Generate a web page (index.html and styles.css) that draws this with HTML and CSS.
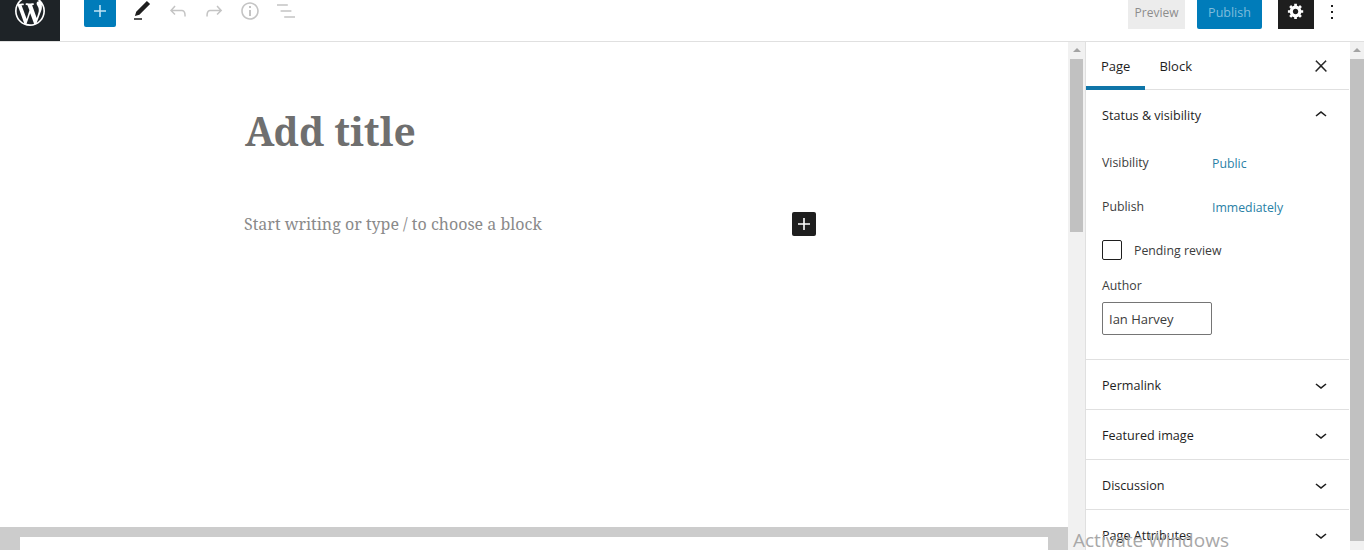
FILE: index.html
```html
<!DOCTYPE html>
<html lang="en">
<head>
    <meta charset="UTF-8">
    <meta name="viewport" content="width=device-width, initial-scale=1.0">
    <title>Add New Page</title>
    <link rel="stylesheet" href="styles.css">
</head>
<body>
    <header class="topbar">
        <a class="wp-logo" href="#">
            <svg viewBox="0 0 20 20" width="30" height="30"><path fill="#fff" d="M20 10c0-5.51-4.49-10-10-10C4.48 0 0 4.49 0 10c0 5.52 4.48 10 10 10 5.51 0 10-4.48 10-10zM7.78 15.37L4.37 6.22c.55-.02 1.17-.08 1.17-.08.5-.06.44-1.13-.06-1.11 0 0-1.45.11-2.37.11-.18 0-.37 0-.58-.01C4.12 2.69 6.87 1.11 10 1.11c2.33 0 4.45.87 6.05 2.34-.68-.11-1.65.39-1.65 1.58 0 .74.45 1.36.9 2.1.35.61.55 1.36.55 2.46 0 1.49-1.4 5-1.4 5l-3.03-8.37c.54-.02.82-.17.82-.17.5-.05.44-1.25-.06-1.22 0 0-1.44.12-2.38.12-.87 0-2.33-.12-2.33-.12-.5-.03-.56 1.2-.06 1.22l.92.08 1.26 3.41zM17.41 10c.24-.64.74-1.87.43-4.25.7 1.29 1.05 2.71 1.05 4.25 0 3.29-1.73 6.24-4.4 7.78.97-2.59 1.94-5.2 2.92-7.78zM6.1 18.09C3.12 16.65 1.11 13.53 1.11 10c0-1.3.23-2.48.72-3.59C3.25 10.3 4.67 14.2 6.1 18.09zm4.03-6.63l2.58 6.98c-.86.29-1.76.45-2.71.45-.79 0-1.57-.11-2.29-.33.81-2.38 1.62-4.74 2.42-7.1z"/></svg>
        </a>
        <div class="tools">
            <button class="tool-add"><svg viewBox="0 0 24 24" width="24" height="24"><path fill="#bfe3f5" d="M18 11.2h-5.2V6h-1.6v5.2H6v1.6h5.2V18h1.6v-5.2H18z"/></svg></button>
            <button class="tool"><svg viewBox="0 0 24 24" width="24" height="24"><path fill="#1e1e1e" d="M20.1 5.1L16.9 2 6.2 12.7l-1.3 4.4 4.5-1.3L20.1 5.1zM4 20.8h8v-1.5H4v1.5z"/></svg></button>
            <button class="tool"><svg viewBox="0 0 24 24" width="24" height="24"><path fill="#c4c4c4" d="M18.3 11.7c-.6-.6-1.4-.9-2.3-.9H6.7l2.9-3.3-1.1-1-4.5 5L8.5 16l1-1-2.7-2.7H16c.5 0 .9.2 1.3.5 1 1 1 3.4 1 4.5v.3h1.5v-.2c0-1.5 0-4.3-1.5-5.7z"/></svg></button>
            <button class="tool"><svg viewBox="0 0 24 24" width="24" height="24"><path fill="#c4c4c4" d="M15.6 6.5l-1.1 1 2.9 3.3H8c-.9 0-1.7.3-2.3.9-1.4 1.5-1.4 4.2-1.4 5.6v.2h1.5v-.3c0-1.1 0-3.5 1-4.5.3-.3.7-.5 1.3-.5h9.2L14.5 15l1.1 1.1 4.6-4.6-4.6-5z"/></svg></button>
            <button class="tool"><svg viewBox="0 0 24 24" width="24" height="24"><path fill="#c4c4c4" d="M12 3.2c-4.8 0-8.8 3.9-8.8 8.8 0 4.8 3.9 8.8 8.8 8.8 4.8 0 8.8-3.9 8.8-8.8 0-4.8-4-8.8-8.8-8.8zm0 16c-4 0-7.2-3.3-7.2-7.2C4.8 8 8 4.8 12 4.8s7.2 3.3 7.2 7.2c0 4-3.2 7.2-7.2 7.2zM11 17h2v-6h-2v6zm0-8h2V7h-2v2z"/></svg></button>
            <button class="tool"><svg viewBox="0 0 24 24" width="24" height="24"><path fill="#c4c4c4" d="M13.8 5.2H3v1.5h10.8V5.2zm-3.6 12v1.5H21v-1.5H10.2zm7.2-6H6.6v1.5h10.8v-1.5z"/></svg></button>
        </div>
        <div class="actions">
            <button class="btn-preview">Preview</button>
            <button class="btn-publish">Publish</button>
            <button class="btn-settings"><svg viewBox="0 0 20 20" width="18" height="18"><path fill="#fff" d="M18 12h-2.18c-.17.7-.44 1.35-.81 1.93l1.54 1.54-2.1 2.1-1.54-1.54c-.58.36-1.23.63-1.91.79V19H8v-2.18c-.68-.16-1.33-.43-1.91-.79l-1.54 1.54-2.12-2.12 1.54-1.54c-.36-.58-.63-1.23-.79-1.91H1V9.03h2.17c.16-.7.44-1.35.8-1.94L2.43 5.55l2.1-2.1 1.54 1.54c.58-.37 1.24-.64 1.93-.81V2h3v2.18c.68.16 1.33.43 1.91.79l1.54-1.54 2.12 2.12-1.54 1.54c.36.59.64 1.24.8 1.94H18V12zm-8.5 1.5c1.66 0 3-1.34 3-3s-1.34-3-3-3-3 1.34-3 3 1.34 3 3 3z"/></svg></button>
            <button class="btn-more"><svg viewBox="0 0 24 24" width="24" height="24"><path fill="#1e1e1e" d="M13 19h-2v-2h2v2zm0-6h-2v-2h2v2zm0-6h-2V5h2v2z"/></svg></button>
        </div>
    </header>

    <div class="workspace">
        <main class="editor">
            <div class="canvas">
                <h1 class="post-title">Add title</h1>
                <div class="block-row">
                    <p class="placeholder">Start writing or type / to choose a block</p>
                    <button class="block-add"><svg viewBox="0 0 24 24" width="24" height="24"><path fill="#fff" d="M18 11.2h-5.2V6h-1.6v5.2H6v1.6h5.2V18h1.6v-5.2H18z"/></svg></button>
                </div>
            </div>
            <div class="meta-area">
                <div class="meta-sheet"></div>
            </div>
        </main>

        <div class="scrollbar">
            <span class="scroll-arrow"></span>
            <span class="scroll-thumb scroll-thumb-short"></span>
        </div>

        <aside class="sidebar">
            <div class="tabs">
                <span class="tab tab-active">Page</span>
                <span class="tab">Block</span>
                <button class="tab-close"><svg viewBox="0 0 24 24" width="18" height="18"><path fill="#1e1e1e" stroke="#1e1e1e" stroke-width="0.6" d="M13 11.8l6.1-6.3-1-1-6.1 6.2-6.1-6.2-1 1 6.1 6.3-6.5 6.7 1 1 6.5-6.6 6.5 6.6 1-1z"/></svg></button>
            </div>

            <section class="panel panel-open">
                <div class="panel-head">
                    <span>Status &amp; visibility</span>
                    <svg viewBox="0 0 24 24" width="24" height="24"><path fill="#1e1e1e" d="M6.5 12.4L12 8l5.5 4.4-.9 1.2L12 10l-4.5 3.6-1-1.2z"/></svg>
                </div>
                <div class="field field-visibility"><span class="field-label">Visibility</span><a class="field-value" href="#">Public</a></div>
                <div class="field field-publish"><span class="field-label">Publish</span><a class="field-value" href="#">Immediately</a></div>
                <label class="check-row"><span class="checkbox"></span>Pending review</label>
                <div class="author-label">Author</div>
                <div class="author-input">Ian Harvey</div>
            </section>

            <section class="panel">
                <div class="panel-head"><span>Permalink</span><svg viewBox="0 0 24 24" width="24" height="24"><path fill="#1e1e1e" d="M17.5 11.6L12 16l-5.5-4.4.9-1.2L12 14l4.5-3.6 1 1.2z"/></svg></div>
            </section>
            <section class="panel">
                <div class="panel-head"><span>Featured image</span><svg viewBox="0 0 24 24" width="24" height="24"><path fill="#1e1e1e" d="M17.5 11.6L12 16l-5.5-4.4.9-1.2L12 14l4.5-3.6 1 1.2z"/></svg></div>
            </section>
            <section class="panel">
                <div class="panel-head"><span>Discussion</span><svg viewBox="0 0 24 24" width="24" height="24"><path fill="#1e1e1e" d="M17.5 11.6L12 16l-5.5-4.4.9-1.2L12 14l4.5-3.6 1 1.2z"/></svg></div>
            </section>
            <section class="panel">
                <div class="panel-head"><span>Page Attributes</span><svg viewBox="0 0 24 24" width="24" height="24"><path fill="#1e1e1e" d="M17.5 11.6L12 16l-5.5-4.4.9-1.2L12 14l4.5-3.6 1 1.2z"/></svg></div>
            </section>
        </aside>

        <div class="scrollbar scrollbar-side">
            <span class="scroll-arrow"></span>
            <span class="scroll-thumb scroll-thumb-long"></span>
        </div>
    </div>

    <div class="activate">Activate Windows</div>
</body>
</html>
```

FILE: styles.css
```css
html, body {
    height: 100%;
}
body {
    margin: 0;
    height: 550px;
    overflow: hidden;
    display: flex;
    flex-direction: column;
    position: relative;
    background-color: #ffffff;
    color: #1e1e1e;
    font-family: "Open Sans", Arial, sans-serif;
    font-size: 13px;
}
button {
    border: none;
    padding: 0;
    background: none;
    font-family: inherit;
    display: flex;
    align-items: center;
    justify-content: center;
}

/* top toolbar */
.topbar {
    flex: none;
    height: 41px;
    display: flex;
    border-bottom: 1px solid #e0e0e0;
}
.wp-logo {
    width: 60px;
    height: 41px;
    background-color: #1e2327;
    display: flex;
    justify-content: center;
    overflow: hidden;
}
.wp-logo svg {
    margin-top: -4px;
}
.tools {
    display: flex;
    align-items: flex-start;
    margin-left: 24px;
}
.tool-add {
    width: 32px;
    height: 27px;
    margin-right: 8px;
    padding-bottom: 5px;
    background-color: #007cba;
    border-radius: 0 0 2px 2px;
}
.tool {
    width: 36px;
    height: 22px;
}
.tool svg, .btn-more svg {
    flex: none;
}
.actions {
    margin-left: auto;
    padding-right: 14px;
    display: flex;
    align-items: flex-start;
}
.btn-preview {
    width: 57px;
    height: 29px;
    padding-bottom: 4px;
    background-color: #ececec;
    color: #8c8c8c;
    font-size: 12px;
}
.btn-publish {
    width: 65px;
    height: 29px;
    margin-left: 12px;
    padding-bottom: 4px;
    background-color: #007cba;
    color: #7fbcdc;
    font-size: 12.5px;
    border-radius: 0 0 2px 2px;
}
.btn-settings {
    width: 36px;
    height: 29px;
    margin-left: 16px;
    padding-bottom: 7px;
    background-color: #1e1e1e;
}
.btn-more {
    width: 36px;
    height: 24px;
}

/* main area */
.workspace {
    flex: 1;
    min-height: 0;
    display: flex;
}
.editor {
    flex: none;
    width: 1068px;
    display: flex;
    flex-direction: column;
}
.canvas {
    flex: 1;
    padding-left: 244px;
}
.post-title {
    margin: 63px 0 0 1px;
    height: 52px;
    color: #6f6f6f;
    font-family: "Noto Serif", "DejaVu Serif", serif;
    font-size: 39px;
    line-height: 52px;
    font-weight: bold;
}
.block-row {
    width: 572px;
    margin-top: 55px;
    display: flex;
    align-items: center;
    justify-content: space-between;
}
.placeholder {
    margin: 0;
    color: #8a8a8a;
    font-family: "Noto Serif", "DejaVu Serif", serif;
    font-size: 16px;
    line-height: 24px;
}
.block-add {
    width: 24px;
    height: 24px;
    background-color: #1e1e1e;
    border-radius: 2px;
}
.meta-area {
    flex: none;
    height: 23px;
    padding: 10px 20px 0;
    box-sizing: border-box;
    background-color: #cccccc;
}
.meta-sheet {
    height: 13px;
    background-color: #ffffff;
}

/* scrollbars */
.scrollbar {
    flex: none;
    width: 17px;
    display: flex;
    flex-direction: column;
    align-items: center;
    background-color: #f1f1f1;
}
.scrollbar-side {
    width: 14px;
    align-items: flex-start;
    margin-left: 1px;
}
.scroll-arrow {
    width: 0;
    height: 0;
    margin: 6px 0 7px;
    border-left: 4px solid transparent;
    border-right: 4px solid transparent;
    border-bottom: 4px solid #a3a3a3;
}
.scrollbar-side .scroll-arrow {
    margin-left: 3px;
}
.scroll-thumb {
    background-color: #c1c1c1;
}
.scroll-thumb-short {
    width: 13px;
    height: 173px;
}
.scroll-thumb-long {
    width: 14px;
    height: 482px;
}

/* settings sidebar */
.sidebar {
    flex: none;
    width: 263px;
    border-left: 1px solid #e0e0e0;
    overflow: hidden;
}
.tabs {
    height: 47px;
    display: flex;
    align-items: flex-start;
    border-bottom: 1px solid #e0e0e0;
}
.tab {
    height: 44px;
    padding: 0 15px;
    line-height: 48px;
    font-size: 13px;
}
.tab + .tab {
    margin-left: -1px;
}
.tab-active {
    border-bottom: 4px solid #0f75a8;
}
.tab-close {
    width: 24px;
    height: 24px;
    margin: 12px 16px 0 auto;
}
.panel {
    border-bottom: 1px solid #e0e0e0;
}
.panel-head {
    height: 49px;
    padding: 0 16px;
    display: flex;
    align-items: center;
    justify-content: space-between;
    font-size: 12.6px;
    font-weight: 500;
}
.panel:not(.panel-open) .panel-head span {
    padding-top: 2px;
}
.panel-open {
    height: 270px;
    box-sizing: border-box;
}
.panel-open .panel-head {
    height: 50px;
}
.field {
    display: flex;
    padding-left: 16px;
    font-size: 12.3px;
    line-height: 18px;
}
.field-visibility {
    margin-top: 14px;
}
.field-publish {
    margin-top: 25px;
}
.field-label {
    width: 110px;
    color: #3c3c3c;
}
.field-value {
    margin-top: 1px;
    color: #2a81a6;
    text-decoration: none;
}
.check-row {
    display: flex;
    align-items: center;
    margin: 23px 0 0 16px;
    color: #3c3c3c;
    font-size: 12.3px;
}
.checkbox {
    width: 18px;
    height: 18px;
    margin-right: 12px;
    border: 1px solid #1e1e1e;
    border-radius: 2px;
}
.author-label {
    margin: 17px 0 0 16px;
    color: #3c3c3c;
    font-size: 12.3px;
    line-height: 18px;
}
.author-input {
    width: 102px;
    height: 31px;
    margin: 7px 0 0 16px;
    padding-left: 6px;
    border: 1px solid #757575;
    border-radius: 2px;
    color: #3c3c3c;
    font-size: 13px;
    line-height: 33px;
}

/* windows watermark sits over the page */
.activate {
    position: absolute;
    left: 1073px;
    top: 526px;
    color: #a8a8a8;
    font-family: "Open Sans", sans-serif;
    font-size: 19px;
    line-height: 28px;
}
```
